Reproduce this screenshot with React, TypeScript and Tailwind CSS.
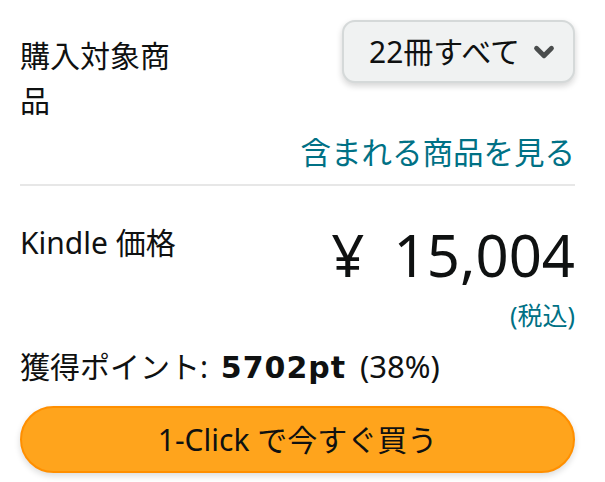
import { ChevronDown } from 'lucide-react';

const font = {
  fontFamily: '"Noto Sans", "Noto Sans CJK JP", sans-serif',
};

export default function App() {
  return (
    <div className="min-h-screen bg-white pl-5 pr-[30px] text-[#0f1111]" style={font}>
      <div className="flex items-start justify-between pt-5">
        <div className="mt-[13px] w-[160px] text-[30px] leading-[45px]">購入対象商品</div>
        <button className="flex h-[63px] w-[233px] items-center justify-between rounded-[13px] border-2 border-[#d5d9d9] bg-[#f0f2f2] pl-[25px] pr-[14px] text-[30px] shadow-[0_3px_6px_rgba(15,17,17,0.18)]">
          <span>22冊すべて</span>
          <ChevronDown className="h-[30px] w-[30px] text-[#4a4d4d]" strokeWidth={3.8} />
        </button>
      </div>
      <div className="mt-[7px] text-right text-[30.5px] leading-[45px] text-[#007185]">
        含まれる商品を見る
      </div>
      <div className="mt-[9px] h-[2px] bg-[#e7e7e7]" />
      <div className="mt-[34px] flex items-start justify-between">
        <div className="text-[30px] leading-[45px]">Kindle 価格</div>
        <div className="text-[58px] leading-[70px]">
          <span className="mr-[14px]">¥</span> 15,004
        </div>
      </div>
      <div className="mt-[7px] text-right text-[25px] leading-[36px] text-[#007185]">(税込)</div>
      <div className="mt-[11px] text-[30px] leading-[45px]">
        獲得ポイント:{' '}
        <span
          className="ml-[5px] mr-[6px] font-bold tracking-[1px]"
          style={{ fontFamily: '"DejaVu Sans", sans-serif' }}
        >
          5702pt
        </span>{' '}
        <span className="text-[31px]">(38%)</span>
      </div>
      <button className="mt-[16px] flex h-[67px] w-full items-center justify-center rounded-full border-2 border-[#ff8f00] bg-[#ffa41c] text-[30px] shadow-[0_3px_6px_rgba(15,17,17,0.15)]">
        1-Click で今すぐ買う
      </button>
    </div>
  );
}
